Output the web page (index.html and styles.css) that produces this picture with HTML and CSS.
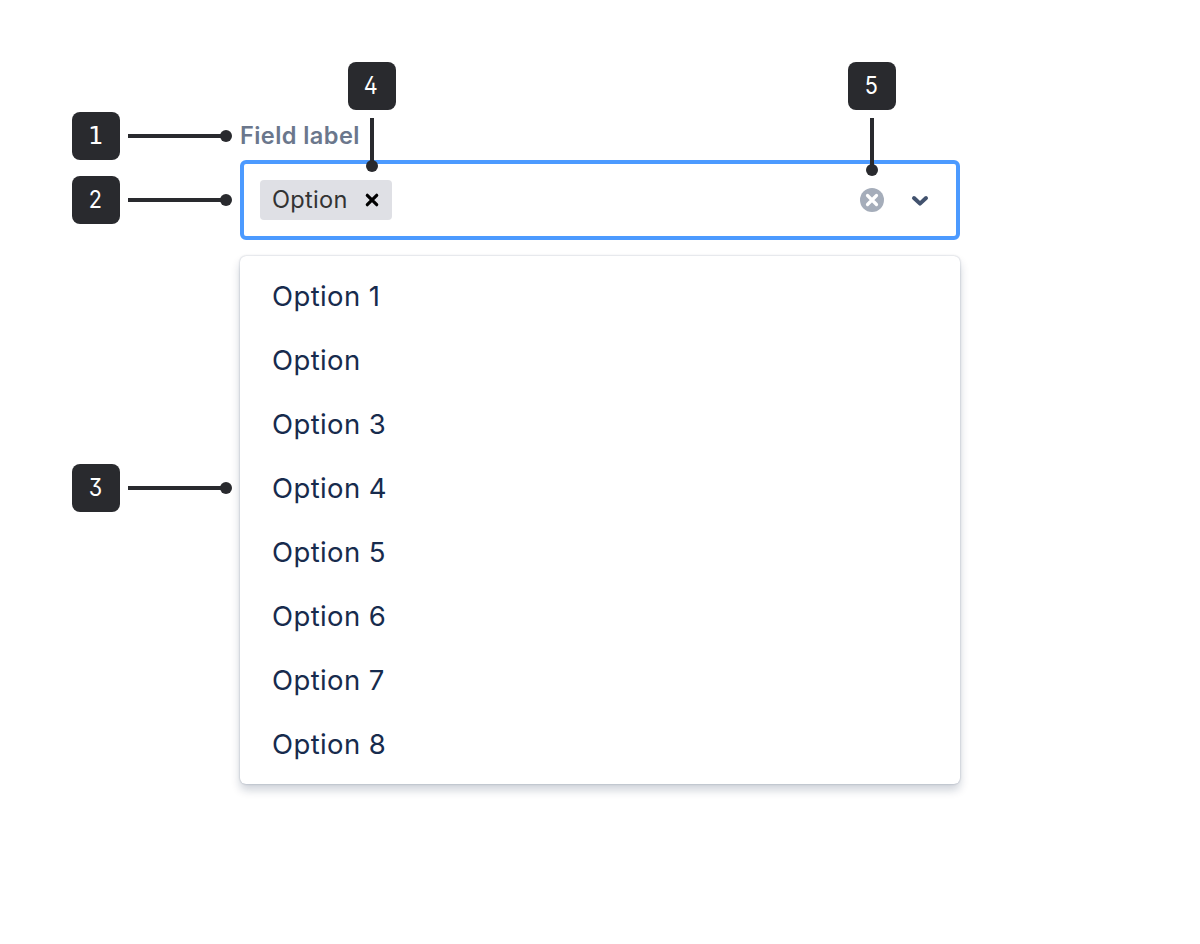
FILE: index.html
```html
<!DOCTYPE html>
<html lang="en">
<head>
    <meta charset="UTF-8">
    <meta name="viewport" content="width=device-width, initial-scale=1.0">
    <title>Select anatomy</title>
    <link rel="stylesheet" href="styles.css">
</head>
<body>
    <div class="anatomy">
        <div class="field">
            <label class="field-label">Field label</label>
            <div class="control">
                <div class="tag">
                    <span class="tag-text">Option</span>
                    <svg class="tag-remove" width="14" height="14" viewBox="0 0 14 14">
                        <path d="M2.3 2.3 11.7 11.7M11.7 2.3 2.3 11.7"/>
                    </svg>
                </div>
                <div class="indicators">
                    <svg class="clear" width="24" height="24" viewBox="0 0 24 24">
                        <circle cx="12" cy="12" r="12"/>
                        <path d="M7.5 7.5 16.5 16.5M16.5 7.5 7.5 16.5"/>
                    </svg>
                    <svg class="chevron" width="24" height="24" viewBox="0 0 24 24">
                        <path d="M6 10 12 15.6 18 10"/>
                    </svg>
                </div>
            </div>
            <ul class="menu">
                <li>Option 1</li>
                <li>Option</li>
                <li>Option 3</li>
                <li>Option 4</li>
                <li>Option 5</li>
                <li>Option 6</li>
                <li>Option 7</li>
                <li>Option 8</li>
            </ul>
        </div>

        <!-- numbered callouts -->
        <div class="callout callout-1">
            <div class="number"><span class="digit digit-one">1</span></div>
            <div class="pointer"></div>
        </div>
        <div class="callout callout-2">
            <div class="number"><span class="digit">2</span></div>
            <div class="pointer"></div>
        </div>
        <div class="callout callout-3">
            <div class="number"><span class="digit">3</span></div>
            <div class="pointer"></div>
        </div>
        <div class="callout down callout-4">
            <div class="number"><span class="digit">4</span></div>
            <div class="pointer"></div>
        </div>
        <div class="callout down callout-5">
            <div class="number"><span class="digit">5</span></div>
            <div class="pointer"></div>
        </div>
    </div>
</body>
</html>
```
FILE: styles.css
```css
* {
    box-sizing: border-box;
}

body {
    margin: 0;
    background-color: #fff;
    font-family: Inter, "Liberation Sans", sans-serif;
}

.anatomy {
    position: relative;
    height: 944px;
    padding: 120px 240px 0;
}

.field {
    width: 720px;
}

.field-label {
    display: block;
    height: 40px;
    line-height: 32px;
    font-size: 23.6px;
    font-weight: 600;
    letter-spacing: 0.4px;
    color: #6b778c;
}

.control {
    display: flex;
    align-items: center;
    justify-content: space-between;
    height: 80px;
    padding: 0 24px 0 16px;
    border: 4px solid #4c9aff;
    border-radius: 6px;
}

.tag {
    display: flex;
    align-items: center;
    justify-content: space-between;
    width: 132px;
    height: 40px;
    padding: 0 13px 0 12px;
    border-radius: 4px;
    background-color: #dfe0e5;
}

.tag-text {
    font-size: 23.6px;
    line-height: 40px;
    letter-spacing: 0.3px;
    color: #333;
}

.tag-remove {
    fill: none;
    stroke: #000;
    stroke-width: 3.2;
    stroke-linecap: round;
}

.indicators {
    display: flex;
    gap: 24px;
}

.clear circle {
    fill: #a5adba;
}

.clear path {
    fill: none;
    stroke: #fff;
    stroke-width: 3.2;
    stroke-linecap: round;
}

.chevron {
    fill: none;
    stroke: #42526e;
    stroke-width: 4;
    stroke-linecap: round;
    stroke-linejoin: round;
}

.menu {
    height: 528px;
    margin: 16px 0 0;
    padding: 8px 0;
    list-style: none;
    border-radius: 6px;
    background-color: #fff;
    box-shadow: 0 0 2px rgba(9, 30, 66, 0.31), 0 6px 10px rgba(9, 30, 66, 0.2);
}

.menu li {
    height: 64px;
    padding: 0 32px;
    line-height: 64px;
    font-size: 27.5px;
    letter-spacing: 0.4px;
    color: #172b4d;
}

.callout {
    position: absolute;
    display: flex;
    align-items: center;
    gap: 8px;
}

.number {
    display: flex;
    align-items: center;
    justify-content: center;
    width: 48px;
    height: 48px;
    padding-right: 2px;
    border-radius: 8px;
    background-color: #292a2e;
    color: #fff;
}

.digit {
    font-size: 24px;
    line-height: 48px;
    font-feature-settings: "cv02", "cv09";
    transform: scaleX(0.9);
}

.digit-one {
    font-family: "DejaVu Sans Mono", monospace;
    transform: scaleX(1.05);
}

.pointer {
    position: relative;
    width: 98px;
    height: 4px;
    background-color: #292a2e;
}

.pointer::after {
    content: "";
    position: absolute;
    right: -6px;
    top: -4px;
    width: 12px;
    height: 12px;
    border-radius: 50%;
    background-color: #292a2e;
}

.down {
    flex-direction: column;
}

.down .pointer {
    width: 4px;
    height: 48px;
}

.down .pointer::after {
    right: -4px;
    top: auto;
    bottom: -6px;
}

.callout-1 {
    left: 72px;
    top: 112px;
}

.callout-2 {
    left: 72px;
    top: 176px;
}

.callout-3 {
    left: 72px;
    top: 464px;
}

.callout-4 {
    left: 348px;
    top: 62px;
}

.callout-5 {
    left: 848px;
    top: 62px;
}

.callout-5 .pointer {
    height: 52px;
}
```
